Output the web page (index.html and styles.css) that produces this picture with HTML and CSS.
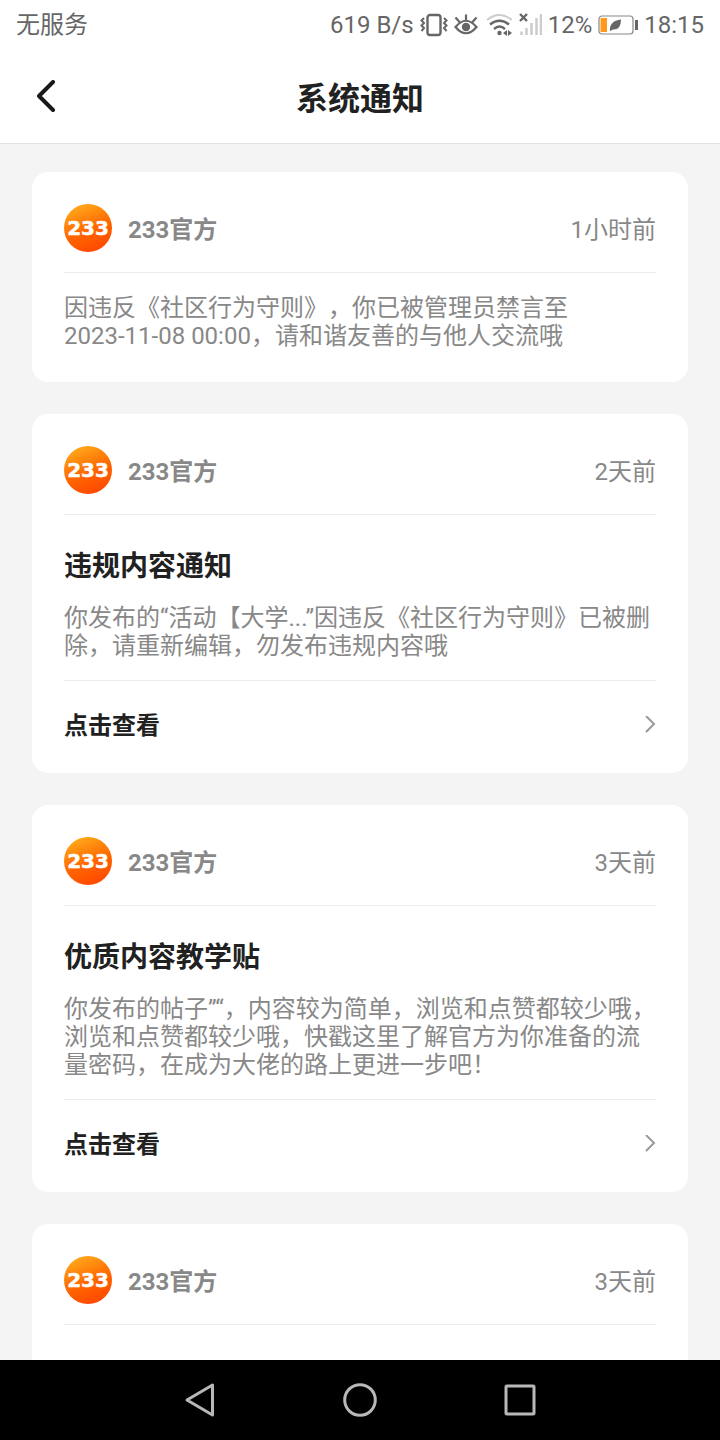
FILE: index.html
```html
<!DOCTYPE html>
<html lang="zh-CN">
<head>
<meta charset="utf-8">
<meta name="viewport" content="width=device-width, initial-scale=1">
<title>系统通知</title>
<link rel="stylesheet" href="styles.css">
</head>
<body>
<svg class="defs" aria-hidden="true">
  <defs>
    <linearGradient id="brand" x1="0.2" y1="0" x2="0.6" y2="1">
      <stop offset="0" stop-color="#ffae1c"/>
      <stop offset="0.6" stop-color="#ff6400"/>
      <stop offset="1" stop-color="#ff4a00"/>
    </linearGradient>
    <symbol id="logo" viewBox="0 0 48 48">
      <circle cx="24" cy="24" r="24" fill="url(#brand)"/>
      <text class="logo-text" x="24" y="31" text-anchor="middle">233</text>
    </symbol>
    <symbol id="chevron" viewBox="0 0 12 20">
      <path d="M2 0 L10 8 L2 16" fill="none" stroke="#999" stroke-width="2"/>
    </symbol>
  </defs>
</svg>
<div class="screen">
  <div class="status">
    <span class="carrier">无服务</span>
    <div class="indicators">
      <span>619 B/s</span>
      <svg width="28" height="24" viewBox="0 0 28 24" fill="none" stroke="#666" stroke-width="2">
        <rect x="7.5" y="2" width="13" height="20" rx="2.5" stroke-width="2.4"/>
        <path d="M4 5 L1.5 7.5 L4 10 L1.5 12.5 L4 15 L1.5 18 M24 5 L26.5 7.5 L24 10 L26.5 12.5 L24 15 L26.5 18"/>
      </svg>
      <svg width="24" height="24" viewBox="0 0 24 24" fill="none" stroke="#666" stroke-width="2.2">
        <path d="M1.5 14 Q12 1.5 22.5 14 Q12 26.5 1.5 14Z M12 8 V1.5 M5.5 9 L1.5 4.5 M18.5 9 L22.5 4.5"/>
        <circle cx="12" cy="14" r="4.2" fill="#666" stroke="none"/>
      </svg>
      <svg width="28" height="24" viewBox="0 0 28 24" fill="none" stroke="#666" stroke-width="2.4">
        <path d="M3 7 Q15 -3 28 7" stroke="#ccc" stroke-width="2"/>
        <path d="M6 11.5 Q15.5 4 25 11.5 M10 16 Q15.5 11 21 16"/>
        <circle cx="15.5" cy="20" r="2.2" fill="#666" stroke="none"/>
        <path d="M19 20 L23 17 V23Z M24 17 L28 20 L24 23Z" fill="#666" stroke="none"/>
      </svg>
      <svg width="24" height="24" viewBox="0 0 24 24" fill="none">
        <path d="M3.5 22 V18.5 M8.5 22 V15 M13.5 22 V10 M18.5 22 V5 M23 22 V1" stroke="#ccc" stroke-width="2.5"/>
        <path d="M2 1 L9 8 M9 1 L2 8" stroke="#666" stroke-width="2.4"/>
      </svg>
      <span>12%</span>
      <svg width="40" height="20" viewBox="0 0 40 20">
        <rect x="1" y="1" width="34" height="18" rx="3" fill="none" stroke="#888" stroke-width="1.2"/>
        <rect x="2.5" y="3" width="6.500" height="14" fill="#ff9a1e"/>
        <path d="M12 16 Q11 6 23 4.5 Q23 15 15 14.500Z" fill="#666"/>
        <rect x="37" y="5" width="3" height="10" fill="#666"/>
      </svg>
      <span>18:15</span>
    </div>
  </div>
  <header class="topbar">
    <button class="back" type="button" aria-label="返回">
      <svg width="24" height="34" viewBox="0 0 24 34" fill="none" stroke="#1a1a1a" stroke-width="4" stroke-linecap="round" stroke-linejoin="round"><path d="M17 2 L3 16 L17 30"/></svg>
    </button>
    <h1>系统通知</h1>
  </header>
  <main class="list">
    <article class="card">
      <div class="card-head">
        <svg class="avatar" role="img" aria-label="233"><use href="#logo"/></svg>
        <span class="name">233官方</span><time>1小时前</time>
      </div>
      <p class="message">因违反《社区行为守则》，你已被管理员禁言至<span class="date">2023-11-08 00:00</span>，请和谐友善的与他人交流哦</p>
    </article>
    <article class="card">
      <div class="card-head">
        <svg class="avatar" role="img" aria-label="233"><use href="#logo"/></svg>
        <span class="name">233官方</span><time>2天前</time>
      </div>
      <h2>违规内容通知</h2>
      <p class="message">你发布的“活动【大学...”因违反《社区行为守则》已被删除，请重新编辑，勿发布违规内容哦</p>
      <a class="more" href="#">点击查看<svg class="chevron" aria-hidden="true"><use href="#chevron"/></svg></a>
    </article>
    <article class="card">
      <div class="card-head">
        <svg class="avatar" role="img" aria-label="233"><use href="#logo"/></svg>
        <span class="name">233官方</span><time>3天前</time>
      </div>
      <h2>优质内容教学贴</h2>
      <p class="message">你发布的帖子”“，内容较为简单，浏览和点赞都较少哦，浏览和点赞都较少哦，快戳这里了解官方为你准备的流量密码，在成为大佬的路上更进一步吧！</p>
      <a class="more" href="#">点击查看<svg class="chevron" aria-hidden="true"><use href="#chevron"/></svg></a>
    </article>
    <article class="card card-open">
      <div class="card-head">
        <svg class="avatar" role="img" aria-label="233"><use href="#logo"/></svg>
        <span class="name">233官方</span><time>3天前</time>
      </div>
    </article>
  </main>
  <nav class="sysnav">
    <button type="button" aria-label="后退"><svg width="36" height="36" viewBox="0 0 36 36"><path d="M30.5 3 V33 L5 18Z"/></svg></button>
    <button type="button" aria-label="主屏幕"><svg width="36" height="36" viewBox="0 0 36 36"><circle cx="18" cy="18" r="15.3"/></svg></button>
    <button type="button" aria-label="最近任务"><svg width="36" height="36" viewBox="0 0 36 36"><rect x="4" y="4" width="28" height="28" rx="1"/></svg></button>
  </nav>
</div>
</body>
</html>
```
FILE: styles.css
```css
* { box-sizing: border-box; }
body {
  margin: 0;
  background: #f4f4f4;
  color: #212121;
  font-family: Roboto, "Noto Sans CJK SC", sans-serif;
  font-size: 24px;
  line-height: 28px;
  text-spacing-trim: space-all;
}
button { padding: 0; border: 0; background: none; cursor: pointer; }
svg { display: block; flex: none; }
h1, h2, p { margin: 0; }
.defs { position: absolute; width: 0; height: 0; }
.screen { display: flex; flex-direction: column; height: 100vh; }
.status {
  display: flex;
  justify-content: space-between;
  align-items: center;
  height: 50px;
  padding: 0 16px;
  background: #fff;
  color: #666;
}
.indicators { display: flex; align-items: center; gap: 6px; }
.topbar {
  display: grid;
  grid-template-columns: 48px 1fr 48px;
  align-items: center;
  height: 94px;
  padding: 0 32px;
  background: #fff;
  border-bottom: 1px solid #e2e2e2;
}
.back { padding-left: 4px; }
h1 { padding-top: 4px; font-size: 32px; line-height: 40px; font-weight: 700; text-align: center; }
.list {
  display: flex;
  flex: 1;
  flex-direction: column;
  gap: 32px;
  min-height: 0;
  padding: 28px 32px 0;
  overflow: hidden;
}
.card { flex: none; padding: 32px 32px 0; background: #fff; border-radius: 16px; }
.card-open { flex: 1 0 auto; border-radius: 16px 16px 0 0; }
.card-head {
  display: flex;
  align-items: center;
  gap: 16px;
  padding-bottom: 20px;
  border-bottom: 1px solid #ececec;
}
.avatar { width: 48px; height: 48px; }
.logo-text { font: 700 20px "DejaVu Sans", sans-serif; fill: #fff; stroke: #fff; stroke-width: 0.5px; }
.name { flex: 1; padding-top: 4px; color: #888; font-weight: 700; }
time { padding-top: 4px; color: #888; }
h2 { padding-top: 36px; font-size: 28px; line-height: 32px; font-weight: 700; }
.message { padding: 21px 0 20px; color: #888; }
.message:last-child { padding-bottom: 32px; }
.date { white-space: nowrap; }
.more {
  display: flex;
  align-items: center;
  justify-content: space-between;
  height: 93px;
  padding-bottom: 2px;
  border-top: 1px solid #ececec;
  color: #212121;
  font-weight: 700;
  text-decoration: none;
}
.chevron { width: 12px; height: 20px; }
.sysnav {
  display: flex;
  justify-content: center;
  align-items: center;
  gap: 124px;
  height: 80px;
  flex: none;
  background: #000;
}
.sysnav svg { fill: none; stroke: #b8b8b8; stroke-width: 3; stroke-linejoin: round; }
```
